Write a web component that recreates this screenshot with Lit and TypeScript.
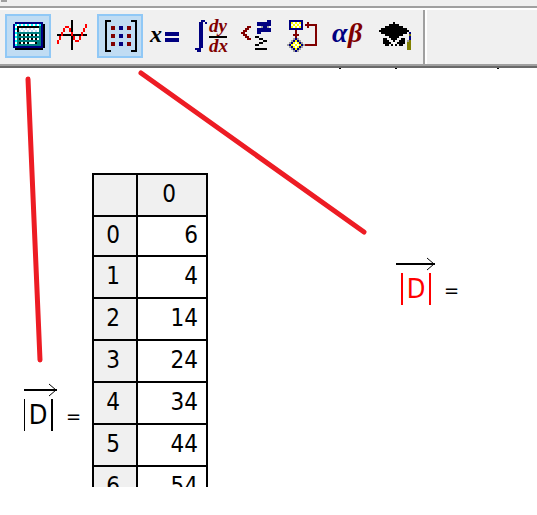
import { LitElement, html, svg, css, type TemplateResult } from "lit";
import { customElement, property } from "lit/decorators.js";
import { classMap } from "lit/directives/class-map.js";

const PALETTE: Record<string, string> = {
  K: "#000000", N: "#000080", R: "#800000", C: "#00ffff", T: "#008080", W: "#ffffff",
  L: "#c0dcf3", Y: "#ffff00", G: "#a0a0a0", O: "#808000", E: "#ff0000",
};

// Draws a bitmap of two-pixel cells, one path for each colour.
function pixels(x: number, y: number, rows: string[]) {
  const paths: Record<string, string> = {};
  rows.forEach((row, r) => {
    [...row].forEach((c, i) => {
      if (PALETTE[c]) {
        paths[c] = (paths[c] ?? "") + `M${x + i * 2} ${y + r * 2}h2v2h-2z`;
      }
    });
  });
  return Object.entries(paths).map(([c, d]) => svg`<path fill=${PALETTE[c]} d=${d}></path>`);
}

const calculator = pixels(8, 8, [
  ".NNNNNNNNNNNNNN.",
  "NCWCWCWCWCWCWCNK",
  "NWKKKKKKKKKKKTNK",
  "NCKWLWLWLWLWWTNK",
  "NWKLWLWLWLWLWTNK",
  "NCTTTTTTTTTTTTNK",
  "NWTKWKWKWKWKWTNK",
  "NCTTTTTTTTTTTTNK",
  "NWTKWKWKWKWKWTNK",
  "NCTTTTTTTTTTTTNK",
  "NWTKWKWKWWWKTTNK",
  "NCTTTTTTTTTTTTNK",
  "NNNNNNNNNNNNNNNK",
  ".KKKKKKKKKKKKKK.",
]);

const graph = pixels(6, 6, [
  ".......K.......",
  ".......K.......",
  ".......K......E",
  "....EE.K......E",
  "...E..EK.....E.",
  "...E..EK.....E.",
  "..E....E....E..",
  "KKEKKKKEKKKKEKK",
  ".E.....KE..E...",
  ".E.....KE..E...",
  "E......K.EE....",
  "E......K.......",
  ".......K.......",
  ".......K.......",
  ".......K.......",
]);

const matrix = svg`
  <path d="M14 7H9V37H14M34 7H39V37H34" fill="none" stroke="#000" stroke-width="2"></path>
  <path fill="#800000" d="M14 12h4v4h-4zM30 12h4v4h-4zM14 20h4v4h-4zM30 20h4v4h-4zM14 28h4v4h-4zM30 28h4v4h-4z"></path>
  <path fill="#000080" d="M22 12h4v4h-4zM22 20h4v4h-4zM22 28h4v4h-4z"></path>`;

const evaluate = svg`
  <text x="7" y="28" font-size="24">x</text>
  <path fill="#000080" d="M22 18h14v4h-14zM22 24h14v4h-14z"></path>`;

const calculus = svg`
  <path fill="#000080" d="M12 6h4v2h2v2h-2v-2h-2v2v24h-2v2h-4v-2h2v-26h2zM10 8h4v26h-4zM6 34h2v2h-2zM8 36h4v2h-4z"></path>
  <text x="20" y="18" font-size="19" fill="#800000">dy</text>
  <text x="20" y="38" font-size="19" fill="#800000">dx</text>
  <path d="M20 22h18v2h-18z"></path>`;

const compare = [
  pixels(6, 12, ["...RR", "..RR.", ".RR..", "RR...", ".RR..", "..RR.", "...RR"]),
  pixels(22, 6, [
    ".....NN",
    "NNNNNNN",
    "NNNNNNN",
    "..GNNG.",
    "NNNNNNN",
    "NNNNNNN",
    "NN.....",
  ]),
  pixels(20, 22, ["KK....", "..KK..", "....KK", "..KK..", "KK....", "......", "KKKKKK"]),
];

const flow = pixels(6, 6, [
  ".NNNNNNN.......",
  ".NYWYWYN..R....",
  ".NWYWYWN.RRRRRR",
  ".NYWYWYN..R...R",
  ".NNNNNNN......R",
  "....R.........R",
  "....R.........R",
  "...RRR........R",
  "....R.........R",
  "...GNG........R",
  "..GNYNG.......R",
  ".GNYWYNG......R",
  "GNYWYWYNGRRRRRR",
  ".GNYWYNG.......",
  "..GNYNG........",
  "...GNG.........",
]);

const greek = svg`
  <text x="5" y="28" font-size="28" fill="#000080">α</text>
  <text x="21" y="28" font-size="28" fill="#800000">β</text>`;

const cap = pixels(6, 8, [
  ".......K........",
  ".....KKKKK......",
  "...KKKKKKKKK....",
  ".KKKKKKKKKKKKK..",
  "KKKKKKKKKKKKKKK.",
  ".KKKKKKKKKKKKK.N",
  "...KKKKKKKKK...O",
  ".....KKKKK.....N",
  "..KK..KKK..KK..N",
  "..KKK..K..KKK.GO",
  "..KKKK.W.KKKK.OO",
  "...KK.KWK.KK..OO",
  "..............OO",
  "..............OO",
]);

interface Tool {
  label: string;
  icon: unknown;
  pressed?: boolean;
}

const TOOLS: Tool[] = [
  { label: "Calculator", icon: calculator, pressed: true },
  { label: "Graph", icon: graph },
  { label: "Matrix", icon: matrix, pressed: true },
  { label: "Evaluation", icon: evaluate },
  { label: "Calculus", icon: calculus },
  { label: "Boolean", icon: compare },
  { label: "Programming", icon: flow },
  { label: "Greek", icon: greek },
  { label: "Symbolic", icon: cap },
];

@customElement("math-toolbar")
export class MathToolbar extends LitElement {
  static styles = css`
    :host { display: block; background: #f0f0f0; }
    .strip { height: 6px; padding-left: 1px; border-bottom: 2px solid #a0a0a0; }
    .grip { width: 6px; height: 2px; background: #a0a0a0; }
    .bar {
      display: flex;
      border-top: 2px solid #fff;
      border-bottom: 2px solid #696969;
      box-shadow: inset 0 -2px #a0a0a0;
      padding-bottom: 2px;
    }
    .tools { display: flex; padding: 4px 4px 6px 5px; }
    .tool {
      width: 46px; height: 44px; padding: 0; border: 0;
      background: transparent; display: block;
    }
    .pressed { background: #c0dcf3; box-shadow: inset 0 0 0 2px #90c8f6; }
    .icon {
      display: block; width: 46px; height: 44px; shape-rendering: crispEdges;
      font-family: "Liberation Serif", serif; font-weight: bold; font-style: italic;
    }
    .divider { width: 2px; background: #a0a0a0; border-right: 2px solid #fff; }
  `;

  render() {
    return html`
      <div class="strip"><div class="grip"></div></div>
      <div class="bar" role="toolbar" aria-label="Math">
        <div class="tools">
          ${TOOLS.map((t) => html`
            <button
              class=${classMap({ tool: true, pressed: !!t.pressed })}
              aria-label=${t.label}
              aria-pressed=${t.pressed ? "true" : "false"}
            ><svg class="icon" viewBox="0 0 46 44" aria-hidden="true">${t.icon}</svg></button>`)}
        </div>
        <div class="divider"></div>
      </div>`;
  }
}

@customElement("vector-norm")
export class VectorNorm extends LitElement {
  @property({ type: Boolean, reflect: true }) active = false;

  static styles = css`
    :host { display: flex; align-items: flex-end; gap: 8px; color: #000; }
    .vector { display: flex; flex-direction: column; align-items: flex-start; gap: 2px; }
    .arrow { display: block; width: 34px; height: 14px; }
    .norm {
      height: 32px; width: 26px; line-height: 32px; text-align: center;
      border-left: 1px solid currentColor; border-right: 2px solid currentColor;
      font-size: 27px;
    }
    :host([active]) .vector { align-items: center; }
    :host([active]) .norm { color: #f00; border-left-width: 2px; }
    :host([active]) .arrow { width: 40px; }
    .equals { font-size: 20px; line-height: 30px; }
  `;

  render() {
    const end = this.active ? 39 : 33;
    return html`
      <div class="vector">
        <svg class="arrow" viewBox="0 0 ${end + 1} 14" aria-hidden="true">
          <path d="M0 7H${end}" fill="none" stroke="#000" stroke-width="2"></path>
          <path d="M${end - 8} 1L${end - 1} 7L${end - 8} 13" fill="none" stroke="#000" stroke-width="1"></path>
        </svg>
        <div class="norm">D</div>
      </div>
      <span class="equals">=</span>`;
  }
}

@customElement("app-root")
export class AppRoot extends LitElement {
  static properties = { values: { attribute: false } };
  declare values: number[];

  constructor() {
    super();
    this.values = [6, 4, 14, 24, 34, 44, 54];
  }

  static styles = css`
    :host {
      display: block; min-height: 100vh; background: #fff; overflow: hidden;
      font-family: "DejaVu Sans Condensed", "Noto Sans", sans-serif;
    }
    .sheet { position: relative; display: flex; align-items: flex-start; padding: 105px 0 28px 24px; }
    .left { margin-top: 210px; width: 68px; flex: none; }
    .window { height: 314px; overflow: hidden; flex: none; }
    .right { margin: 84px 0 0 188px; flex: none; }
    .grid { border-collapse: collapse; table-layout: fixed; width: 116px; font-size: 24px; line-height: 24px; }
    .index { width: 44px; }
    .grid th, .grid td { box-sizing: border-box; height: 42px; border: 2px solid #000; padding: 0 0 2px; }
    .grid tbody tr:first-child > * { height: 40px; }
    .grid th { background: #f0f0f0; font-weight: normal; text-align: center; }
    .grid th.row { padding-right: 4px; }
    .grid th.col { padding-right: 6px; }
    .grid td { text-align: right; padding-right: 8px; }
    .notes { position: absolute; left: 0; top: 0; width: 537px; height: 300px; pointer-events: none; }
  `;

  render(): TemplateResult {
    return html`
      <math-toolbar></math-toolbar>
      <main class="sheet">
        <vector-norm class="left"></vector-norm>
        <div class="window">
          <table class="grid">
            <colgroup><col class="index"><col></colgroup>
            <thead><tr><th></th><th class="col" scope="col">0</th></tr></thead>
            <tbody>
              ${this.values.map((v, i) => html`<tr><th class="row" scope="row">${i}</th><td>${v}</td></tr>`)}
            </tbody>
          </table>
        </div>
        <vector-norm class="right" active></vector-norm>
        <svg class="notes" viewBox="0 0 537 300" aria-hidden="true">
          <path d="M339 0h2v1h-2zM395 0h2v1h-2zM497 0h2v1h-2z"></path>
          <path d="M28 11L40 292M141 5L364 164" fill="none" stroke="#ed1c24" stroke-width="5" stroke-linecap="round"></path>
        </svg>
      </main>`;
  }
}
